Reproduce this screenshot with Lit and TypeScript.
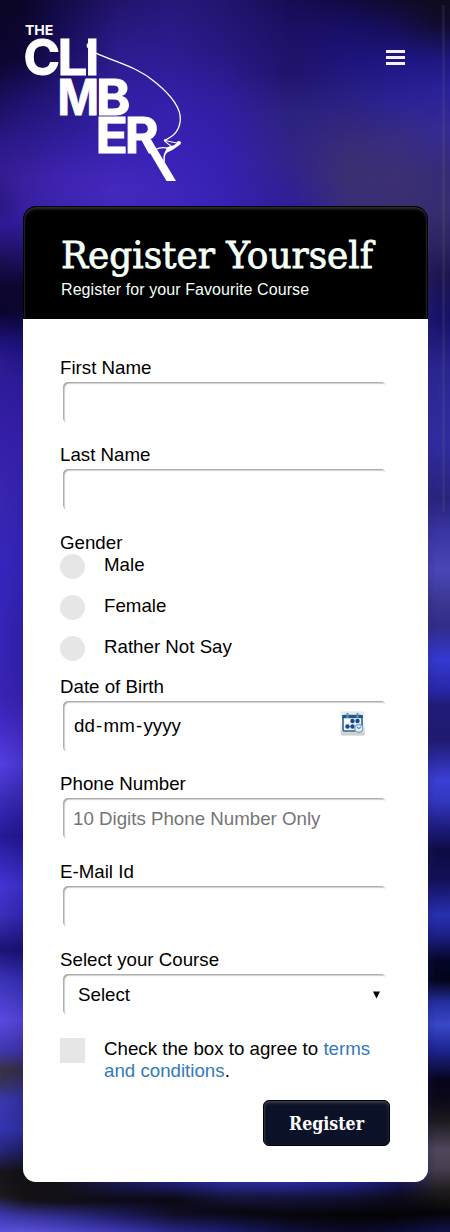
import { LitElement, html, svg, css } from "lit";
import { customElement, property } from "lit/decorators.js";

type Column = { x: number; stops: [number, string][] };

// Vertical colour columns of the blurred backdrop, cross-faded from left to right.
const columns: Column[] = [
  { x: 0, stops: [[0, "#0a0624"], [60, "#0c0630"], [100, "#1a0f5c"], [140, "#2a1886"], [170, "#341c94"], [205, "#2c1880"], [225, "#30189a"], [260, "#1c0f55"], [285, "#0d0630"], [312, "#0b062e"], [340, "#1c1178"], [360, "#2b1a8f"], [420, "#341ea6"], [500, "#3826b0"], [560, "#3626bd"], [690, "#3822b4"], [720, "#4028c4"], [765, "#5340e0"], [800, "#3a2cb8"], [836, "#261a98"], [885, "#4235d4"], [915, "#3a30bc"], [950, "#1c1478"], [980, "#3a34b8"], [1020, "#5a4ae2"], [1050, "#4038b0"], [1070, "#3b3344"], [1082, "#37325a"], [1100, "#3a38b0"], [1130, "#3434b0"], [1150, "#282880"], [1172, "#18141a"], [1195, "#1c181c"], [1215, "#3c38b0"], [1232, "#5a50d8"]] },
  { x: 24, stops: [[0, "#0c0628"], [60, "#0e0738"], [100, "#1e1270"], [140, "#2c1a8c"], [180, "#3c209e"], [215, "#361ea0"], [260, "#1c1060"], [285, "#0d0630"], [312, "#0c0630"], [345, "#1c1178"], [380, "#2b1a98"], [450, "#3420a6"], [560, "#3222b0"], [640, "#2c20a4"], [700, "#3420a4"], [765, "#4832cc"], [800, "#3424a4"], [836, "#1e1488"], [885, "#3a2cc0"], [915, "#3024a8"], [950, "#18106c"], [980, "#302aa8"], [1020, "#5040cc"], [1050, "#3830a0"], [1070, "#302a40"], [1100, "#302e98"], [1130, "#2c2c98"], [1150, "#1c1c60"], [1172, "#121014"], [1200, "#141216"], [1216, "#38349c"], [1232, "#5a50d8"]] },
  { x: 60, stops: [[0, "#130b46"], [50, "#180e5c"], [100, "#26177e"], [140, "#2e1e9a"], [175, "#4022b0"], [207, "#3e24b0"], [1182, "#141218"], [1202, "#121018"], [1217, "#332e92"], [1232, "#5048cc"]] },
  { x: 120, stops: [[0, "#22146c"], [50, "#2c1c8c"], [100, "#3020a4"], [150, "#3922b0"], [190, "#4629c0"], [207, "#4428b8"], [1182, "#1a1a58"], [1200, "#0c0a14"], [1216, "#1e1c60"], [1232, "#3c38b0"]] },
  { x: 175, stops: [[0, "#24187a"], [50, "#2c1c90"], [110, "#3520ac"], [160, "#3a22b8"], [207, "#4026bc"], [1182, "#20207a"], [1200, "#0b0912"], [1215, "#100e28"], [1232, "#282688"]] },
  { x: 225, stops: [[0, "#20156e"], [50, "#261880"], [100, "#301e9e"], [150, "#3420ae"], [207, "#3622b4"], [1182, "#2a2c98"], [1198, "#14143c"], [1212, "#08080e"], [1232, "#1c1c70"]] },
  { x: 290, stops: [[0, "#160c54"], [30, "#1c1064"], [75, "#20146c"], [115, "#2c2280"], [160, "#322488"], [207, "#2e1e98"], [1182, "#2a2aa0"], [1198, "#14143c"], [1215, "#06060a"], [1232, "#10103c"]] },
  { x: 350, stops: [[0, "#120a42"], [30, "#180f68"], [60, "#1e147c"], [100, "#2a2084"], [145, "#392c78"], [175, "#3c3070"], [207, "#382e78"], [1182, "#22228c"], [1198, "#101030"], [1215, "#040406"], [1232, "#0a0a28"]] },
  { x: 400, stops: [[0, "#100b2a"], [25, "#150e50"], [60, "#1e1684"], [100, "#2c2296"], [140, "#382d80"], [180, "#3c3072"], [207, "#3a2e70"], [1182, "#161658"], [1198, "#0b0a1c"], [1215, "#040406"], [1232, "#0c0c38"]] },
  { x: 436, stops: [[0, "#0f0b1c"], [25, "#110c30"], [60, "#1e1780"], [90, "#2a2098"], [130, "#362a92"], [170, "#352c78"], [210, "#362e70"], [245, "#2a2460"], [275, "#1c1650"], [320, "#17126a"], [370, "#2a2690"], [440, "#302ca0"], [500, "#28247c"], [530, "#3834a0"], [570, "#4a46b6"], [600, "#3c3894"], [625, "#302c88"], [660, "#3438d0"], [690, "#2826a8"], [705, "#1e1c78"], [740, "#1e1a70"], [780, "#3a3ed4"], [800, "#3438c0"], [830, "#1a1a78"], [850, "#0e0c44"], [880, "#120f58"], [915, "#2830b0"], [935, "#1c2088"], [960, "#04062a"], [980, "#030418"], [1003, "#2430a0"], [1025, "#3848c8"], [1050, "#1c2490"], [1080, "#06041c"], [1100, "#0c0818"], [1120, "#1c181c"], [1150, "#50475c"], [1170, "#453c4c"], [1190, "#201c1e"], [1213, "#040408"], [1232, "#12124a"]] },
];

@customElement("blur-backdrop")
export class BlurBackdrop extends LitElement {
  static styles = css`
    :host { display: block; position: absolute; inset: 0; overflow: hidden; }
    .column { position: absolute; inset: 0; }
    .track { position: absolute; left: 442px; top: 5px; width: 3px; height: 507px; background: rgba(120, 120, 120, 0.14); }
  `;
  render() {
    return html`${columns.map((c, i) => {
      const bg = `linear-gradient(to bottom, ${c.stops.map(([y, col]) => `${col} ${y}px`).join(", ")})`;
      const mask = i ? `linear-gradient(to right, transparent ${columns[i - 1].x}px, #000 ${c.x}px)` : "none";
      return html`<div class="column" style="background:${bg};-webkit-mask-image:${mask};mask-image:${mask}"></div>`;
    })}<div class="track"></div>`;
  }
}

const letter = (t: string, x: number, y: number, w: number) =>
  svg`<text class="big" x=${x} y=${y} textLength=${w} lengthAdjust="spacingAndGlyphs">${t}</text>`;

@customElement("climber-logo")
export class ClimberLogo extends LitElement {
  static styles = css`
    :host { display: block; width: 162px; height: 162px; }
    svg { display: block; overflow: visible; }
    text { font-family: Inter, "Liberation Sans", sans-serif; fill: #fff; }
    .big { font-size: 49.5px; font-weight: 700; stroke: #fff; stroke-width: 0.9px; }
    .the { font-size: 13.3px; font-weight: 700; }
  `;
  render() {
    return html`<svg width="162" height="162" viewBox="22 22 162 162" role="img" aria-label="The Climber">
      <text class="the" x="25" y="34.7" textLength="28.4" lengthAdjust="spacingAndGlyphs">THE</text>
      ${letter("C", 23.4, 75.4, 36.5)}${letter("L", 57.6, 75.4, 30)}${letter("I", 85.2, 75.4, 14)}
      ${letter("M", 57.6, 114.6, 41.5)}${letter("B", 96, 114.6, 34.5)}
      ${letter("E", 95.6, 153.2, 32.5)}${letter("R", 124.8, 153.2, 34)}
      <path d="M142 139.5H151L176 181H166.5Z" fill="#fff" />
      <path d="M90.5 43.2a2.6 2.6 0 1 0 .6 4.8M95.5 52.8C116 62.5 137 66.500 155 82C171 95 181 109 180.300 120C179.600 130 173 137 164.300 140.300" fill="none" stroke="#fff" stroke-width="1.300" />
      <path d="M164 140C170 142.200 173 142.300 178 143M164 140.300C167 142.500 167.500 145 171 145.500M156 149.500C160 146.600 165 147.500 169 148.500" fill="none" stroke="#fff" stroke-width="1.100" />
      <path d="M177.400 142.500L179.500 145L175 148.300L171.500 150.500C168 151.800 165.800 153 165 156L164.800 162L163.200 163L163.600 155.500C164.500 152 166.500 150 166.500 147.800Q170 145.500 174 145.200Z" fill="#fff" />
      <circle cx="178.900" cy="143" r="2.100" fill="#fff" />
    </svg>`;
  }
}

@customElement("slab-text")
export class SlabText extends LitElement {
  @property() text = "";
  @property({ type: Number }) size = 37;
  @property({ type: Number }) length = 313;
  @property({ type: Number }) weight = 400;
  @property({ type: Number }) thicken = 0;
  @property() color = "#fff";
  static styles = css`
    :host { display: block; }
    svg { display: block; overflow: visible; }
    text { font-family: "DejaVu Serif", "Liberation Serif", serif; }
  `;
  render() {
    return html`<svg width=${this.length} height=${this.size * 1.2}>
      <text x="0" y=${this.size} font-size=${this.size} font-weight=${this.weight} fill=${this.color}
        stroke=${this.color} stroke-width=${this.thicken}
        textLength=${this.length} lengthAdjust="spacingAndGlyphs">${this.text}</text></svg>`;
  }
}

@customElement("app-root")
export class AppRoot extends LitElement {
  static styles = css`
    :host { display: block; position: relative; width: 450px; height: 1232px; overflow: hidden; color: #000;
      font: 18.72px/22px "Liberation Sans", Arial, sans-serif; }
    * { box-sizing: border-box; }
    .page { position: relative; display: flex; flex-direction: column; height: 1232px; }
    .top { display: flex; justify-content: space-between; padding: 22px 45px 0 22px; height: 206px; }
    .menu { display: flex; flex-direction: column; gap: 3px; width: 19px; margin-top: 28px; }
    .menu i { height: 3px; background: #f3f0f6; }
    .card { display: flex; flex-direction: column; width: 405px; margin-left: 23px; height: 976px; }
    .head { height: 113px; flex: none; padding: 24px 37px 0; background: #000; color: #f4fff8;
      border: 1px solid #000; border-radius: 13px 13px 0 0; box-shadow: inset 0 2px 3px #303030, inset 1px 0 1px #181818, inset -1px 0 1px #181818; }
    .sub { font-size: 16px; line-height: 20px; letter-spacing: 0.08px; }
    slab-text.title { height: 49px; }
    form { display: block; flex: 1; padding: 37px 38px 0 37px; border-radius: 0 0 13px 13px; background: #fff; }
    label, .label { display: block; height: 22px; padding-top: 1px; }
    .field { display: flex; align-items: center; width: 323px; height: 41px; margin: 4px 0 20px 3px; padding: 0 10px; border: 0;
      border-radius: 5px; background: transparent; outline: 0; font: inherit; color: #000; box-shadow: inset 1.500px 1.500px 1px #aaa; }
    .field::placeholder { color: #757575; opacity: 1; }
    .gap21 { margin-bottom: 21px; }
    .date { height: 51px; justify-content: space-between; padding: 0 20px 1px 11px; }
    .dash { margin: 0 1.250px; }
    .date svg { margin-top: -5px; }
    .select { justify-content: space-between; padding: 0 5px 0 15px; margin-bottom: 22px; }
    .options { height: 122px; }
    .option { display: flex; gap: 19px; height: 41px; }
    .text { padding-top: 1px; }
    .dot { width: 25px; height: 25px; margin-top: 1px; flex: none; border-radius: 50%; background: #e6e6e6; }
    .box { border-radius: 0; }
    .agree { display: flex; gap: 19px; height: 63px; }
    .agree a { color: #337ab7; text-decoration: none; }
    .submit { width: 127px; height: 46px; margin-left: auto; padding: 10px 0 0 25px; border: 1px solid #000;
      border-radius: 6px; background: #0b1228; box-shadow: inset 0 2px 3px #39404e, inset 1px 0 1px #252b3c; }
  `;

  private field(label: string, placeholder = "", cls = "") {
    return html`<label>${label}</label><input class="field ${cls}" type="text" placeholder=${placeholder} aria-label=${label} />`;
  }

  render() {
    return html`
      <blur-backdrop></blur-backdrop>
      <div class="page">
        <div class="top">
          <climber-logo></climber-logo>
          <div class="menu"><i></i><i></i><i></i></div>
        </div>
        <div class="card">
          <div class="head">
            <slab-text class="title" .text=${"Register Yourself"} .size=${37} .length=${312} .thicken=${0.8} .color=${"#f4fff8"}></slab-text>
            <div class="sub">Register for your Favourite Course</div>
          </div>
          <form>
            ${this.field("First Name")}
            ${this.field("Last Name", "", "gap21")}
            <div class="label">Gender</div>
            <div class="options">
              ${["Male", "Female", "Rather Not Say"].map((t) => html`<div class="option"><span class="dot"></span><span class="text">${t}</span></div>`)}
            </div>
            <div class="label">Date of Birth</div>
            <div class="field date"><span>dd<span class="dash">-</span>mm<span class="dash">-</span>yyyy</span>
              <svg width="26" height="26" viewBox="0 0 26 26">
                <defs><linearGradient id="tile" x1="0" y1="0" x2="0" y2="1"><stop offset="0" stop-color="#ddd" /><stop offset=".25" stop-color="#fff" /><stop offset=".75" stop-color="#e4e4e4" /><stop offset="1" stop-color="#c5c2bf" /></linearGradient></defs>
                <rect x="0.500" y="0.500" width="24.500" height="24" rx="2" fill="url(#tile)" opacity=".9" />
                <rect x="3" y="4.500" width="19" height="15.500" rx="1" fill="#eef4fa" stroke="#2c649c" stroke-width="1.600" />
                <path d="M2.200 4h20.600v3.200H2.200z" fill="#1f5790" />
                <path d="M7.500 2v5M17.500 2v5" stroke="#5f8fc0" stroke-width="2" />
                <rect x="5" y="8" width="5" height="4.500" fill="#fff" />
                <g fill="#164a84"><circle cx="12.500" cy="10" r="2.200" /><circle cx="17.500" cy="10" r="2.200" /><circle cx="7.500" cy="15.500" r="2.200" /><circle cx="12.500" cy="15.500" r="2.200" /></g>
                <circle cx="18.800" cy="17.500" r="4" fill="#e3edf6" stroke="#7fa5cb" stroke-width="1.400" />
                <path d="M17 16l1.800 1.600 2-1.600" fill="none" stroke="#5f8dbb" stroke-width="1.100" />
              </svg>
            </div>
            ${this.field("Phone Number", "10 Digits Phone Number Only", "gap21")}
            ${this.field("E-Mail Id", "", "gap21")}
            <div class="label">Select your Course</div>
            <div class="field select"><span>Select</span>
              <svg width="9" height="8" viewBox="0 0 9 8"><path d="M1 .5h7L4.500 7.500z" fill="#000" /></svg>
            </div>
            <div class="agree"><span class="dot box"></span><span class="text">Check the box to agree to <a>terms and conditions</a>.</span></div>
            <div class="submit"><slab-text .text=${"Register"} .size=${19} .length=${75} .weight=${700}></slab-text></div>
          </form>
        </div>
      </div>`;
  }
}
